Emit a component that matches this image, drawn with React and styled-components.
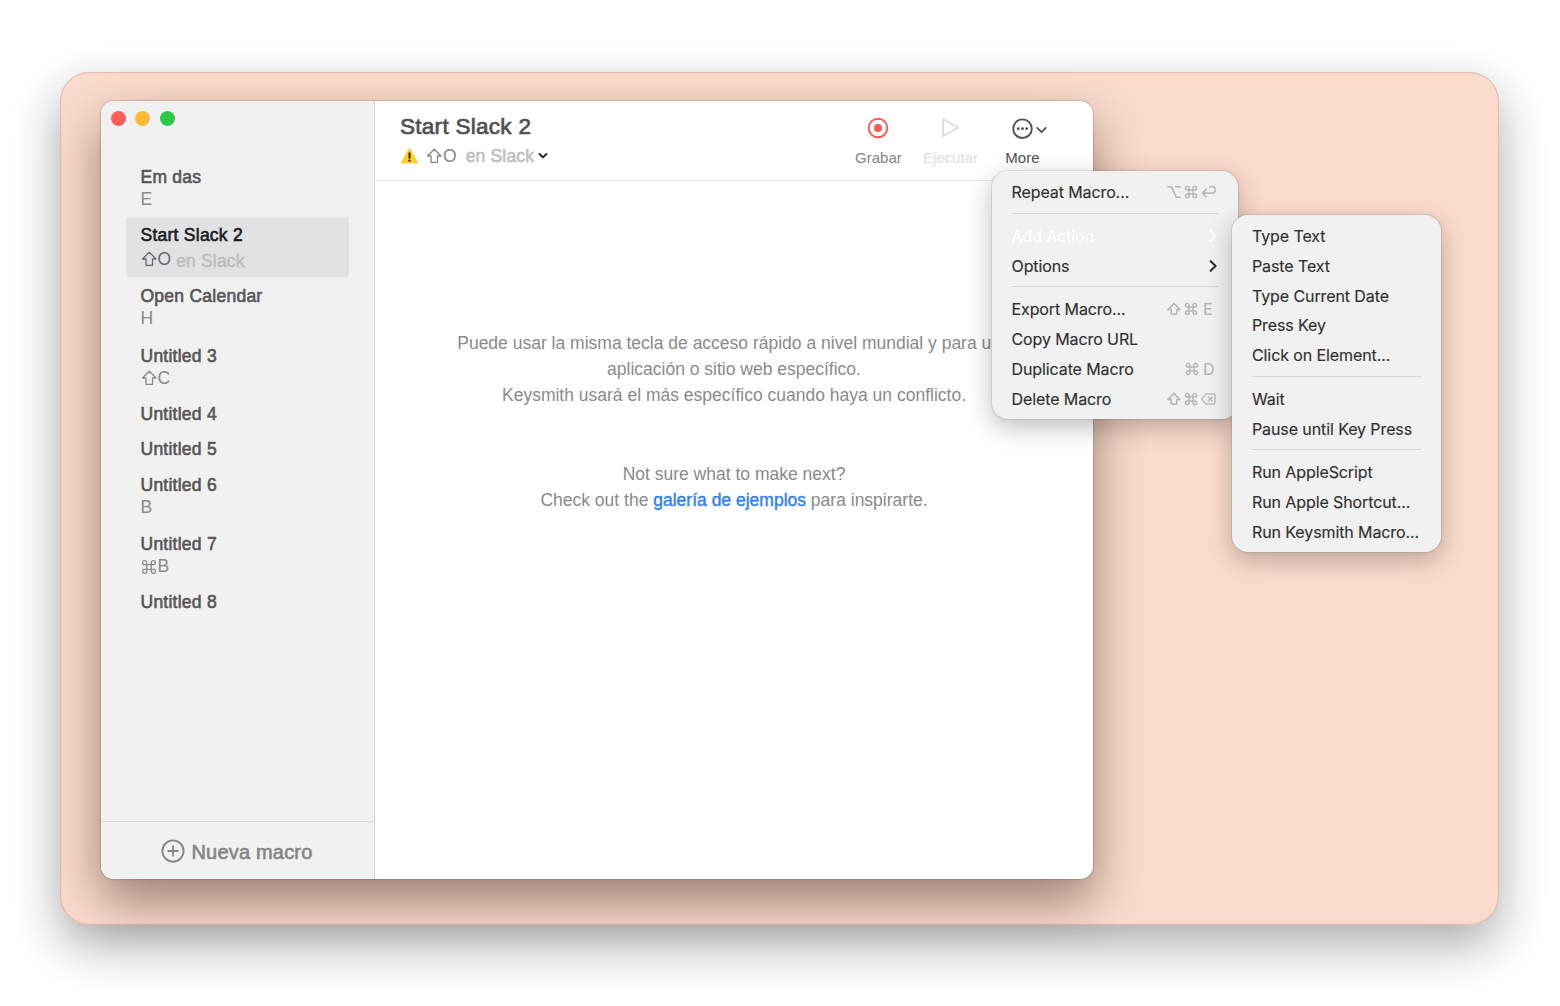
import React from "react";
import styled, { createGlobalStyle } from "styled-components";

const GlobalStyle = createGlobalStyle`
  * {
    box-sizing: border-box;
  }
  body {
    margin: 0;
    background: #ffffff;
    font-family: "Liberation Sans", Arial, sans-serif;
  }
`;

const Page = styled.div`
  width: 1560px;
  height: 1006px;
  padding: 72px 60px 0;
  overflow: hidden;
`;

const Desktop = styled.div`
  position: relative;
  width: 1439px;
  height: 853px;
  padding: 28.5px 40px 0 41px;
  background: #fbdbcc;
  border-radius: 29px;
  box-shadow: inset 0 0 0 1.2px rgba(140, 90, 70, 0.22),
    0 20px 50px rgba(0, 0, 0, 0.33);
`;

const Window = styled.div`
  display: flex;
  width: 992px;
  height: 778.5px;
  background: #ffffff;
  border-radius: 13px;
  box-shadow: 0 0 1px 0.7px rgba(90, 60, 50, 0.2),
    0 22px 50px rgba(40, 20, 10, 0.46);
`;

const Sidebar = styled.aside`
  display: flex;
  flex-direction: column;
  width: 274px;
  background: #f1f1f1;
  border-right: 1px solid #d6d6d6;
  border-radius: 13px 0 0 13px;
`;

const Lights = styled.div`
  display: flex;
  gap: 9.7px;
  height: 58.5px;
  padding: 10px 0 0 9.7px;
`;

const Light = styled.span`
  width: 15px;
  height: 15px;
  border-radius: 50%;
  background: ${({ color }) => color};
`;

const MacroList = styled.div`
  flex: 1;
  padding: 0 25px;
`;

const MacroItem = styled.div`
  height: ${({ $height }) => $height}px;
  padding: 7px 14.5px 0;
  margin-bottom: ${({ $selected }) => ($selected ? "1.5px" : "0")};
  border-radius: 4px;
  background: ${({ $selected }) => $selected && "#e1e2e4"};
  color: ${({ $selected }) => ($selected ? "#1c1c1e" : "#565656")};
`;

const MacroName = styled.div`
  font-size: 17.5px;
  line-height: 22px;
  letter-spacing: 0.25px;
  -webkit-text-stroke: 0.6px currentColor;
`;

const Shortcut = styled.div`
  display: flex;
  align-items: center;
  height: 22px;
  gap: 1px;
  margin-top: ${({ $selected }) => ($selected ? "2px" : "0.4px")};
  font-size: 17.5px;
  color: ${({ $selected }) => ($selected ? "#6a6a6a" : "#8a8a8a")};
`;

const AppName = styled.span`
  margin: ${({ $margin }) => $margin || "0"};
  font-size: 17.5px;
  letter-spacing: 0.18px;
  color: #bdbdbf;
  -webkit-text-stroke: 0.55px currentColor;
`;

const NewMacro = styled.div`
  display: flex;
  align-items: center;
  justify-content: center;
  gap: 6px;
  height: 58px;
  padding-right: 1px;
  border-top: 1px solid #d9d9d9;
  color: #858585;
`;

const NewMacroLabel = styled.span`
  padding-top: 3px;
  font-size: 20px;
  letter-spacing: 0.2px;
  -webkit-text-stroke: 0.6px currentColor;
`;

const Main = styled.main`
  flex: 1;
  display: flex;
  flex-direction: column;
`;

const Header = styled.header`
  display: flex;
  justify-content: space-between;
  height: 80.5px;
  padding: 12.5px 34.6px 0 25px;
  border-bottom: 1px solid #e6e6e6;
`;

const Title = styled.div`
  font-size: 22.5px;
  line-height: 28px;
  letter-spacing: 0.28px;
  color: #505050;
  -webkit-text-stroke: 0.7px currentColor;
`;

const Trigger = styled.div`
  display: flex;
  align-items: center;
  gap: 1px;
  height: 30px;
  color: #858585;
  font-size: 17.5px;
`;

const Tools = styled.div`
  display: flex;
`;

const Tool = styled.div`
  display: flex;
  flex-direction: column;
  align-items: center;
  width: 72px;
  padding-top: 4px;
  color: ${({ color }) => color};
  font-size: 15px;
`;

const ToolIcon = styled.div`
  position: relative;
  display: flex;
  justify-content: center;
  height: 32px;
`;

const ToolChevron = styled.svg`
  position: absolute;
  left: 25px;
  top: 8.5px;
`;

const Empty = styled.div`
  padding: 148.5px 80px 0;
  text-align: center;
  font-size: 17.5px;
  line-height: 26px;
  color: #8a8a8a;
  white-space: nowrap;
`;

const Paragraph = styled.div`
  display: flex;
  flex-direction: column;
  align-items: center;
  margin-bottom: 53.5px;
`;

const Link = styled.a`
  color: #2f80f2;
  -webkit-text-stroke: 0.4px currentColor;
`;

const Menu = styled.div`
  position: absolute;
  left: ${({ $left }) => $left}px;
  top: ${({ $top }) => $top}px;
  width: ${({ $width }) => $width}px;
  padding: ${({ $padding }) => $padding};
  background: #f1f1f1;
  border-radius: 16px;
  box-shadow: 0 0 1px 0.8px rgba(0, 0, 0, 0.1), 0 8px 26px rgba(0, 0, 0, 0.26);
  font-family: Inter, sans-serif;
`;

const MenuItem = styled.div`
  display: flex;
  align-items: center;
  justify-content: space-between;
  height: 29.8px;
  font-size: 16px;
  letter-spacing: -0.1px;
  white-space: nowrap;
  -webkit-text-stroke: 0.15px currentColor;
  color: ${({ $active }) => ($active ? "#ffffff" : "#303030")};
`;

const Separator = styled.div`
  height: 13.7px;
  padding-top: 5.5px;

  &::before {
    content: "";
    display: block;
    height: 1px;
    background: #d6d6d6;
  }
`;

const Keys = styled.span`
  display: flex;
  align-items: center;
  gap: 3px;
  margin-right: ${({ $end }) => $end || 2}px;
  color: #b5b5b5;
`;

const Letter = styled.span`
  width: 13px;
  text-align: center;
  font-size: 16px;
`;

const stroke = {
  fill: "none",
  stroke: "currentColor",
  strokeLinejoin: "round",
  strokeLinecap: "round",
};

const Shift = () => (
  <svg width="16" height="16" viewBox="0 0 16 16" {...stroke} strokeWidth="1.3">
    <path d="M8.3 1.2 1.5 8H5v6.3h6.5V8h3.6z" />
  </svg>
);

const MenuShift = () => (
  <svg width="14" height="14" viewBox="0 0 14 14" {...stroke} strokeWidth="1.5">
    <path d="M7 1.5 1 7.6h3.2v3.7c0 .6.4 1 1 1h3.6c.6 0 1-.4 1-1V7.6H13z" />
  </svg>
);

const Command = ({ size = 14, width = 1.4 }) => (
  <svg width={size} height={size} viewBox="0 0 14 14" {...stroke} strokeWidth={width}>
    <path d="M5 5V3.2A1.8 1.8 0 1 0 3.2 5h7.6A1.8 1.8 0 1 0 9 3.2v7.6A1.8 1.8 0 1 0 10.8 9H3.2A1.8 1.8 0 1 0 5 10.8z" />
  </svg>
);

const Option = () => (
  <svg width="14" height="14" viewBox="0 0 14 14" {...stroke} strokeWidth="1.6">
    <path d="M1 1.8h3.4l4.8 10.4H13M8.6 1.8H13" />
  </svg>
);

const Return = () => (
  <svg width="15" height="14" viewBox="0 0 15 14" {...stroke} strokeWidth="1.5">
    <path d="M8.5 1.8h4.2c.8 0 1.3.5 1.3 1.3v3.6c0 .8-.5 1.3-1.3 1.3H1.7M5.2 4.4 1.4 8l3.8 3.6" />
  </svg>
);

const Backspace = () => (
  <svg width="15" height="14" viewBox="0 0 15 14" {...stroke} strokeWidth="1.3">
    <path d="M5.6 1.8h7c.9 0 1.4.5 1.4 1.4v7.6c0 .9-.5 1.4-1.4 1.4h-7c-.5 0-.9-.2-1.2-.5l-3.2-4c-.4-.5-.4-.9 0-1.4l3.2-4c.3-.3.7-.5 1.2-.5zM7.2 5l4 4M11.2 5l-4 4" />
  </svg>
);

const Chevron = () => (
  <svg width="10" height="14" viewBox="0 0 10 14" {...stroke} strokeWidth="2.1">
    <path d="M2.6 2.2 7.6 7l-5 4.8" />
  </svg>
);

const WarningIcon = styled.svg`
  margin-right: 6px;
`;

const Warning = () => (
  <WarningIcon width="19" height="18" viewBox="0 0 20 18">
    <path
      d="M9.1 1.4c.4-.7 1.4-.7 1.8 0l7.9 14c.4.7-.1 1.5-.9 1.5H2.1c-.8 0-1.3-.8-.9-1.5z"
      fill="#ffcf2e"
    />
    <path d="M10 6v5" stroke="#222" strokeWidth="2" strokeLinecap="round" />
    <circle cx="10" cy="14" r="1.2" fill="#222" />
  </WarningIcon>
);

const keyIcons = {
  shift: <MenuShift />,
  command: <Command />,
  option: <Option />,
  return: <Return />,
  backspace: <Backspace />,
};

const macros = [
  { name: "Em das", letter: "E", height: 58 },
  { name: "Start Slack 2", modifier: "shift", letter: "O", app: "en Slack", selected: true, height: 59.5 },
  { name: "Open Calendar", letter: "H", height: 60 },
  { name: "Untitled 3", modifier: "shift", letter: "C", height: 58 },
  { name: "Untitled 4", height: 35.2 },
  { name: "Untitled 5", height: 35.8 },
  { name: "Untitled 6", letter: "B", height: 59.5 },
  { name: "Untitled 7", modifier: "command", letter: "B", height: 58 },
  { name: "Untitled 8", height: 35 },
];

const moreMenu = [
  { label: "Repeat Macro...", keys: ["option", "command", "return"] },
  null,
  { label: "Add Action", submenu: true, active: true },
  { label: "Options", submenu: true },
  null,
  { label: "Export Macro...", keys: ["shift", "command", "E"], end: 4 },
  { label: "Copy Macro URL" },
  { label: "Duplicate Macro", keys: ["command", "D"], end: 3 },
  { label: "Delete Macro", keys: ["shift", "command", "backspace"] },
];

const actionMenu = [
  { label: "Type Text" },
  { label: "Paste Text" },
  { label: "Type Current Date" },
  { label: "Press Key" },
  { label: "Click on Element..." },
  null,
  { label: "Wait" },
  { label: "Pause until Key Press" },
  null,
  { label: "Run AppleScript" },
  { label: "Run Apple Shortcut..." },
  { label: "Run Keysmith Macro..." },
];

const MenuList = ({ items, left, top, width, padding }) => (
  <Menu $left={left} $top={top} $width={width} $padding={padding}>
    {items.map((item, i) =>
      item ? (
        <MenuItem key={i} $active={item.active}>
          <span>{item.label}</span>
          {item.submenu && <Chevron />}
          {item.keys && (
            <Keys $end={item.end}>
              {item.keys.map((key) => (
                <React.Fragment key={key}>
                  {keyIcons[key] || <Letter>{key}</Letter>}
                </React.Fragment>
              ))}
            </Keys>
          )}
        </MenuItem>
      ) : (
        <Separator key={i} />
      )
    )}
  </Menu>
);

const MacroRow = ({ macro }) => (
  <MacroItem $height={macro.height} $selected={macro.selected}>
    <MacroName>{macro.name}</MacroName>
    {macro.letter && (
      <Shortcut $selected={macro.selected}>
        {macro.modifier === "shift" && <Shift />}
        {macro.modifier === "command" && <Command size={16} width={1.15} />}
        <span>{macro.letter}</span>
        {macro.app && <AppName $margin="4px 0 0 4px">{macro.app}</AppName>}
      </Shortcut>
    )}
  </MacroItem>
);

const App = () => {
  return (
    <Page>
      <GlobalStyle />
      <Desktop>
        <Window>
          <Sidebar>
            <Lights>
              <Light color="#fc5f5a" />
              <Light color="#fdbb33" />
              <Light color="#30c848" />
            </Lights>
            <MacroList>
              {macros.map((macro) => (
                <MacroRow key={macro.name} macro={macro} />
              ))}
            </MacroList>
            <NewMacro>
              <svg width="24" height="24" viewBox="0 0 24 24" {...stroke} strokeWidth="1.8">
                <circle cx="12" cy="12" r="10.6" />
                <path d="M12 7.2v9.6M7.2 12h9.6" />
              </svg>
              <NewMacroLabel>Nueva macro</NewMacroLabel>
            </NewMacro>
          </Sidebar>
          <Main>
            <Header>
              <div>
                <Title>Start Slack 2</Title>
                <Trigger>
                  <Warning />
                  <Shift />
                  <span>O</span>
                  <AppName $margin="0 3px 0 8px">en Slack</AppName>
                  <svg width="10" height="8" viewBox="0 0 10 8" fill="none" stroke="#222" strokeWidth="2" strokeLinecap="round" strokeLinejoin="round">
                    <path d="M1.5 2 5 5.4 8.5 2" />
                  </svg>
                </Trigger>
              </div>
              <Tools>
                <Tool color="#858585">
                  <ToolIcon>
                    <svg width="22" height="22" viewBox="0 0 22 22">
                      <circle cx="11" cy="11" r="9.3" fill="none" stroke="#fb5a55" strokeWidth="1.9" />
                      <circle cx="11" cy="11" r="4" fill="#fb5a55" />
                    </svg>
                  </ToolIcon>
                  Grabar
                </Tool>
                <Tool color="#dedede">
                  <ToolIcon>
                    <svg width="22" height="22" viewBox="0 0 22 22" {...stroke} strokeWidth="1.9">
                      <path d="M4 2.2v17L19.4 10.7z" />
                    </svg>
                  </ToolIcon>
                  Ejecutar
                </Tool>
                <Tool color="#505050">
                  <ToolIcon>
                    <svg width="22" height="22" viewBox="0 0 22 22">
                      <circle cx="11.5" cy="11.7" r="9.3" fill="none" stroke="currentColor" strokeWidth="1.9" />
                      <circle cx="7.3" cy="11.7" r="1.4" fill="currentColor" />
                      <circle cx="11.5" cy="11.7" r="1.4" fill="currentColor" />
                      <circle cx="15.7" cy="11.7" r="1.4" fill="currentColor" />
                    </svg>
                    <ToolChevron width="11" height="8" viewBox="0 0 11 8" {...stroke} strokeWidth="1.7">
                      <path d="M1.2 1.8 5.5 6.2 9.8 1.8" />
                    </ToolChevron>
                  </ToolIcon>
                  More
                </Tool>
              </Tools>
            </Header>
            <Empty>
              <Paragraph>
                <span>Puede usar la misma tecla de acceso rápido a nivel mundial y para una</span>
                <span>aplicación o sitio web específico.</span>
                <span>Keysmith usará el más específico cuando haya un conflicto.</span>
              </Paragraph>
              Not sure what to make next?
              <br />
              Check out the <Link>galería de ejemplos</Link> para inspirarte.
            </Empty>
          </Main>
        </Window>
        <MenuList items={moreMenu} left={931.5} top={99.3} width={246.5} padding="6.3px 19.7px 5.4px 20px" />
        <MenuList items={actionMenu} left={1172} top={143} width={208.5} padding="6.2px 20px 5.5px" />
      </Desktop>
    </Page>
  );
};

export default App;
